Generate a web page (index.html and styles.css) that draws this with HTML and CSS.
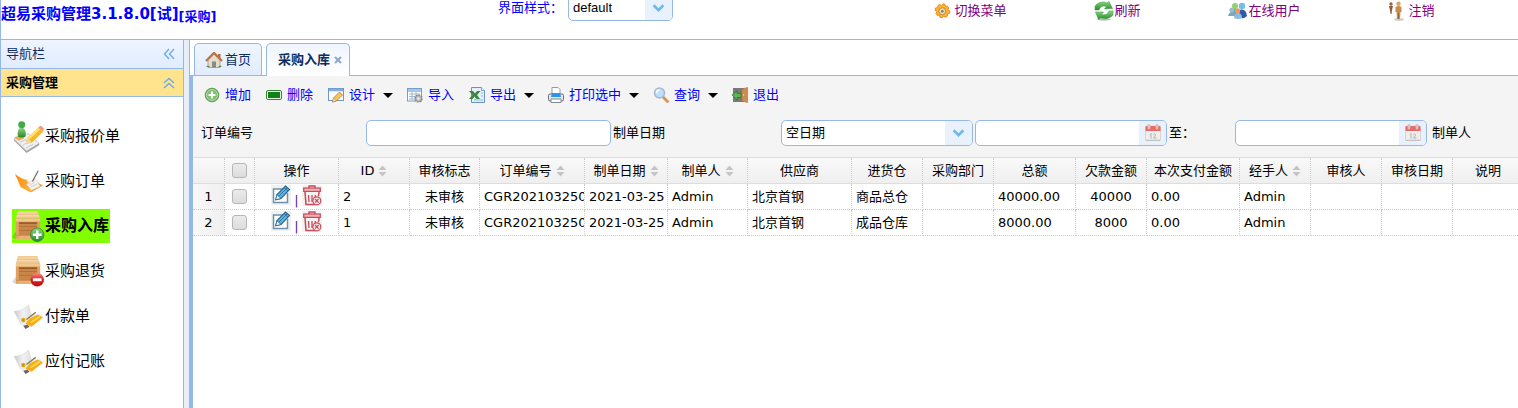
FILE: index.html
```html
<!DOCTYPE html>
<html lang="zh-CN">
<head>
<meta charset="utf-8">
<title>超易采购管理</title>
<link rel="stylesheet" href="styles.css">
</head>
<body>
<svg class="defs" width="0" height="0" aria-hidden="true">
  <defs>
    <linearGradient id="wood" x1="0" y1="0" x2="0" y2="1"><stop offset="0" stop-color="#d28f50"/><stop offset="1" stop-color="#e3a563"/></linearGradient>
    <linearGradient id="woodLid" x1="0" y1="0" x2="0" y2="1"><stop offset="0" stop-color="#f0c88e"/><stop offset=".5" stop-color="#f9ddb0"/><stop offset="1" stop-color="#e8bb80"/></linearGradient>
    <linearGradient id="green" x1="0" y1="0" x2="0" y2="1"><stop offset="0" stop-color="#8fd486"/><stop offset="1" stop-color="#218a25"/></linearGradient>
    <linearGradient id="red" x1="0" y1="0" x2="0" y2="1"><stop offset="0" stop-color="#f78a8a"/><stop offset=".5" stop-color="#dc1f25"/><stop offset="1" stop-color="#c00a12"/></linearGradient>
    <linearGradient id="orange" x1="0" y1="0" x2="1" y2="1"><stop offset="0" stop-color="#ff8a10"/><stop offset="1" stop-color="#ffb63a"/></linearGradient>
    <linearGradient id="paper" x1="0" y1="0" x2="1" y2="0"><stop offset="0" stop-color="#c9c9c9"/><stop offset=".5" stop-color="#f2f2f2"/><stop offset="1" stop-color="#dedede"/></linearGradient>
  </defs>
  <symbol id="crate" viewBox="0 0 34 34">
    <path d="M0 28l4-6h22v8H4z" fill="#000" opacity=".14"/>
    <path d="M6 1h20l3 8H4z" fill="url(#woodLid)"/>
    <path d="M5 4.500h22" stroke="#deb277" stroke-width=".7"/>
    <rect x="4" y="9" width="25" height="21" rx="1" fill="url(#wood)"/>
    <path d="M4 10.500h25" stroke="#f3c88d" stroke-width="3"/>
    <rect x="7" y="13" width="19" height="13" fill="#c98648"/>
    <path d="M7 13.500h19" stroke="#8f5526" stroke-width="1.500"/>
    <path d="M7 17h19M7 21h19" stroke="#ad6c36" stroke-width=".8"/>
    <path d="M4 28h25" stroke="#e8b274" stroke-width="3.500"/>
    <path d="M5.500 12v17M27.500 12v17" stroke="#dfa465" stroke-width="2.500"/>
    <path d="M4 26h25" stroke="#b97a3f" stroke-width=".6"/>
  </symbol>
  <symbol id="payment" viewBox="0 0 32 32">
    <path d="M2 11Q10 11 16 5l3 11Q15 21 9 24z" fill="url(#paper)" stroke="#ccc" stroke-width=".5"/>
    <path d="M19 15l8-2 3 3-12 8-8 2-1-3z" fill="#eee"/>
    <path d="M17 18l8-4 5 3-11 9-6-3z" fill="#f8ad12"/>
    <path d="M18 22l9-6" stroke="#fdd95a" stroke-width="1.600"/>
    <path d="M14 19l9-7" stroke="#8b7a55" stroke-width="1.300"/>
    <circle cx="11" cy="19.500" r="2.200" fill="#e9aa18"/>
    <circle cx="11" cy="19.500" r=".8" fill="#b87d08"/>
    <path d="M11 25l4-1 2 2-4 2z" fill="#666"/>
  </symbol>
  <symbol id="edit" viewBox="0 0 20 20">
    <rect width="20" height="20" fill="#f1f1f1"/>
    <path d="M13 4H2.500v13.500h14V8" fill="#fff" stroke="#6d92b1" stroke-width="1.500"/>
    <path d="M5 14.500l1-5L14.500 1l4 3.500L10 13.500z" fill="#5bb5e3" stroke="#2d668d" stroke-width="1.100"/>
    <path d="M6 9.500l4 4-5.500 1.500z" fill="#e3eef5" stroke="#2d668d" stroke-width=".9"/>
    <path d="M8 11l8-8M13 2.500L17 6" fill="none" stroke="#2d668d" stroke-width=".8"/>
  </symbol>
  <symbol id="trash" viewBox="0 0 20 21">
    <rect width="20" height="21" fill="#f3f1f2"/>
    <path d="M7 3V1h6v2" fill="none" stroke="#c74b5a" stroke-width="1.400"/>
    <rect x="1.700" y="3" width="16.600" height="3.400" fill="#efb1b7" stroke="#c74b5a" stroke-width="1.200"/>
    <path d="M3 7l1 12.500h10M17 7l-.5 4" fill="none" stroke="#c74b5a" stroke-width="1.500"/>
    <path d="M6.500 10l.5 7M10 10v7M13.300 10v2" stroke="#c74b5a" stroke-width="1.300"/>
    <circle cx="14.800" cy="15.800" r="4" fill="#f8e4e5" stroke="#c74b5a" stroke-width="1.200"/>
    <path d="M13 14l3.600 3.600M16.600 14L13 17.600" stroke="#c74b5a" stroke-width="1.200"/>
  </symbol>
  <symbol id="calendar" viewBox="0 0 18 18">
    <rect x="1.500" y="3" width="15" height="14" rx="1" fill="#bdbdbd"/>
    <rect x="1.500" y="2" width="15" height="14" rx="1" fill="#f0eeec" stroke="#cfcccb" stroke-width=".6"/>
    <path d="M1.500 7V3q0-1 1-1h13q1 0 1 1v4z" fill="#e96c68"/>
    <path d="M5 1v3M13 1v3" stroke="#d8c4c4" stroke-width="2.800" stroke-linecap="round"/>
    <path d="M6 10.500l1-1v5M9.500 10.500q1-1.500 2 0 0 1.500-2 3.500h3" fill="none" stroke="#b0b0b0"/>
  </symbol>
  <symbol id="sort" viewBox="0 0 10 12"><path d="M5 0l4.500 5h-9zM5 12l4.500-5h-9z" fill="#c4c4c4"/></symbol>
</svg>

<header class="top">
  <h1 class="brand">超易采购管理3.1.8.0[试]<small>[采购]</small></h1>
  <div class="theme">
    <label for="theme">界面样式：</label>
    <span class="combo combo-theme"><select id="theme"><option>default</option></select><svg class="chev" viewBox="0 0 12 8"><path d="M1.500 1.500L6 6l4.500-4.500"/></svg></span>
  </div>
  <a class="toplink spaced" href="#menu"><svg width="17" height="17" viewBox="0 0 17 17"><path d="M9 .8l2 .6.4 2 2-.2 1.500 1.800-1 1.800 2 1.200-.4 2.400-2.200.4.200 2.200-2 1.200-1.800-1.200-1.500 1.800-2.400-.6-.2-2.200-2.200.4-1.400-1.900 1.200-1.900L1 7.200l.6-2.300 2.200-.2L3.900 2.500l2-1.100L7.600 2.700z" fill="#ffb52c" stroke="#ea8412" stroke-width=".9"/><circle cx="8.300" cy="8.200" r="3.500" fill="#e9d9ae" stroke="#c48a35"/><circle cx="8.300" cy="8.200" r="1.300" fill="#77777f"/></svg>切换菜单</a>
  <a class="toplink" href="#refresh"><svg width="20" height="20" viewBox="0 0 20 20"><ellipse cx="10" cy="18.500" rx="7" ry="1.200" fill="#bbb"/><path d="M1 9V5q5-6 12-3l2-1.500 3.500 7-8 .5 2-2.500Q7 3.500 5 9z" fill="url(#green)" stroke="#4fa851" stroke-width=".6"/><path d="M19 10v4q-5 5.500-12 3l-2.500 1.500L1.500 11h8l-2 2.500Q13 15 15 10z" fill="url(#green)" stroke="#4fa851" stroke-width=".6"/></svg>刷新</a>
  <a class="toplink" href="#online"><svg width="20" height="18" viewBox="0 0 20 18"><circle cx="7" cy="4" r="3" fill="#8fd46c"/><circle cx="14" cy="4" r="3.200" fill="#75bdea"/><path d="M3 12q1-6 5-5l3 6z" fill="#4c96cf"/><path d="M11 8q7-2 8 6-4 4-8 1z" fill="#3158ad"/><circle cx="4" cy="8" r="2.600" fill="#9bbcca"/><path d="M0 14q1-4 4-4 4 0 4 4z" fill="#7fa7bb"/><circle cx="9.500" cy="9" r="2.700" fill="#f09a55"/><path d="M6 16q0-5 4-5 4 0 4 5-4 2-8 0z" fill="#8abedf"/></svg>在线用户</a>
  <a class="toplink spaced" href="#logout"><svg width="17" height="20" viewBox="0 0 17 20"><ellipse cx="11" cy="18.500" rx="5" ry="1.300" fill="#ccc"/><circle cx="3" cy="3" r="1.700" fill="#996336"/><path d="M1 5h4l-1 4-.5 4h-1L2 9z" fill="#8d5a34"/><circle cx="10.500" cy="2.800" r="2.200" fill="#d8a764"/><path d="M7.500 6q3-2 6 0v5h-1l-.5 7h-3l-.5-7h-1z" fill="#c68f4d"/><path d="M10.500 12v6" stroke="#8c5c2e" stroke-width=".8"/></svg>注销</a>
</header>

<div class="workspace">
  <aside class="side">
    <h2 class="side-title">导航栏<button type="button" class="icon-btn" aria-label="收起"><svg width="12" height="12" viewBox="0 0 12 12"><path d="M6 1L1.500 6 6 11M11 1L6.500 6l4.500 5"/></svg></button></h2>
    <h3 class="side-title group">采购管理<button type="button" class="icon-btn" aria-label="折叠"><svg width="12" height="12" viewBox="0 0 12 12"><path d="M1 6l5-4.500L11 6M1 11l5-4.500 5 4.500"/></svg></button></h3>
    <nav class="nav">
      <a href="#quote"><svg viewBox="0 0 34 34"><path d="M2 19l15-5 11 10-13 8z" fill="#f1f1f1" stroke="#c2c2c2" stroke-width=".8"/><path d="M2 19.500L15 32l13-8v2L15 34 2 21z" fill="#a5a5a5"/><path d="M6 21l6-2M8 23l7-3M11 26l7-4M14 29l8-4" stroke="#bcbcbc" stroke-width=".8"/><path d="M2 18l8-3 3 3-6 3z" fill="#f3a84d"/><path d="M6 17q-1-9 4-9t4 9q-4 2-8 0z" fill="url(#green)"/><circle cx="10" cy="4.800" r="3.600" fill="#42aa48"/><path d="M14 25l2-7L27 8l5 4-11 11z" fill="#f6b926"/><path d="M16 18L27 8l2 1.500L18 20z" fill="#ffe16c"/><path d="M27 8l1.500-1.500q2-1 4 2 .5 1.500-.5 3.500z" fill="#f39a72"/><path d="M14 25l2-7 4 5z" fill="#eed7ae"/></svg>采购报价单</a>
      <a href="#order"><svg viewBox="0 0 34 34"><path d="M9 21l14-5 9 5-12 7z" fill="#f6a232"/><path d="M3 9q7 6 12 6l6 10-2 3-10-5z" fill="url(#orange)"/><path d="M15 20l9-6 5 8-9 4z" fill="#f4f4f2" stroke="#ccc" stroke-width=".6"/><path d="M18 21l6-3.500M19 23l7-3.500" stroke="#c4c4c4" stroke-width=".8"/><path d="M21 17l6-11" stroke="#666" stroke-width="1.200"/><path d="M15 15l5 6" stroke="#fbe0bd" stroke-width="1.500"/></svg>采购订单</a>
      <a href="#stock-in" class="active"><svg viewBox="0 0 34 34"><use href="#crate"/><circle cx="26" cy="25.500" r="7" fill="url(#green)" stroke="#247f27" stroke-width=".7"/><path d="M26 21v9M21.500 25.500h9" stroke="#fff" stroke-width="2.600"/></svg>采购入库</a>
      <a href="#return"><svg viewBox="0 0 34 34"><use href="#crate"/><circle cx="26" cy="25.500" r="7" fill="url(#red)"/><path d="M21.500 25.500h9" stroke="#fff" stroke-width="3"/></svg>采购退货</a>
      <a href="#pay"><svg viewBox="0 0 32 32"><use href="#payment"/></svg>付款单</a>
      <a href="#payable"><svg viewBox="0 0 32 32"><use href="#payment"/></svg>应付记账</a>
    </nav>
  </aside>

  <main class="main">
    <div class="tabs">
      <a class="tab" href="#home"><svg width="18" height="16" viewBox="0 0 18 16"><path d="M3 8l6-6 6 6v7.500H3z" fill="#e5ddcc" stroke="#998c78" stroke-width=".7"/><path d="M13 2h2.500v5H13z" fill="#b66a44"/><path d="M1 9l8-8 8 8" fill="none" stroke="#b9754c" stroke-width="2.400"/><rect x="7" y="9.500" width="4" height="6" fill="#8a8985"/><path d="M1 15q2-3 4 0M13 15q2-3 4 0" fill="#569448"/></svg>首页</a>
      <div class="tab current"><b>采购入库</b><button type="button" class="tab-close" aria-label="关闭"><svg width="8" height="8" viewBox="0 0 8 8"><path d="M1 1l6 6M7 1L1 7" stroke="#8aa9cc" stroke-width="2"/></svg></button></div>
    </div>
    <div class="panel">
      <div class="toolbar">
        <a href="#add"><svg viewBox="0 0 16 16"><circle cx="8" cy="8" r="6.800" fill="#65aa58" stroke="#5a9c4e"/><circle cx="8" cy="8" r="5.500" fill="#7fbd70" stroke="#b9dfb0"/><path d="M8 4.500v7M4.500 8h7" stroke="#fff" stroke-width="2.200"/></svg>增加</a>
        <a href="#delete"><svg viewBox="0 0 16 16"><rect x=".5" y="3.500" width="15" height="9" rx="1.500" fill="#eef6ec" stroke="#33843a"/><rect x="2" y="5" width="12" height="6" fill="#118217"/></svg>删除</a>
        <a href="#design" class="menu"><svg viewBox="0 0 16 16"><rect x=".5" y="1.500" width="15" height="12" fill="#fcfdff" stroke="#6f96c6"/><path d="M1 3h14" stroke="#83afe0" stroke-width="2.500"/><path d="M4.500 15l1-4 6-6 3 3-6 6z" fill="#f7c45b" stroke="#b57d32" stroke-width=".8"/><path d="M4.500 15l1-4 3 3z" fill="#f7e1c0" stroke="#b57d32" stroke-width=".5"/></svg>设计</a>
        <a href="#import"><svg viewBox="0 0 16 16"><rect x=".5" y="1.500" width="14" height="12.500" fill="#fff" stroke="#779dcc"/><path d="M1 3.500h13" stroke="#a9c6e6" stroke-width="3"/><path d="M2 7h11M2 9.500h11M2 12h8M5 5v8M9 5v8" stroke="#9eb8cb"/><circle cx="11.500" cy="11.500" r="3.400" fill="#bbb" stroke="#888" stroke-width="1.700" stroke-dasharray="1.600 1"/><circle cx="11.500" cy="11.500" r="1.200" fill="#eee"/></svg>导入</a>
        <a href="#export" class="menu"><svg viewBox="0 0 16 16"><path d="M2.500.5h10l3 3v12h-13z" fill="#e4effb" stroke="#6792c6"/><path d="M12.500.5v3h3" fill="#fff" stroke="#6792c6" stroke-width=".8"/><path d="M5 13h9M12 6h2M12 9h2" stroke="#91b8df"/><path d="M0 4h4l2 2.500L8 4h3.500L8 8l3 4H7.500L5.500 9.500 3.500 12H0l3.500-4z" fill="#39863d"/></svg>导出</a>
        <a href="#print" class="menu"><svg viewBox="0 0 16 16"><path d="M4 8V.5h6l2 2V8z" fill="#fff" stroke="#999"/><rect x=".5" y="7" width="15" height="7" rx="1.500" fill="#e4e6e9" stroke="#686f7b"/><path d="M4 6h8l1 4H3z" fill="#2794ed"/><path d="M3 12h10v3.500H3z" fill="#fff" stroke="#838890"/></svg>打印选中</a>
        <a href="#query" class="menu"><svg viewBox="0 0 16 16"><path d="M10 10l4.500 4.500" stroke="#d59355" stroke-width="2.800" stroke-linecap="round"/><circle cx="6.500" cy="6" r="5" fill="#bddffa" stroke="#a6b9d2" stroke-width="1.600"/><path d="M3.500 6q0-3 3-3" fill="none" stroke="#fff" stroke-width="1.500"/></svg>查询</a>
        <a href="#exit"><svg viewBox="0 0 16 16"><path d="M1 1h11v14H1z" fill="#777b77"/><path d="M10 2l5.500-1.500v15L10 14z" fill="#c98d51" stroke="#a96e3a" stroke-width=".6"/><path d="M0 8l5-4v2.500h4v4H5V13z" fill="#5bb451" stroke="#2d7329" stroke-width=".7"/><circle cx="11.500" cy="8" r=".7" fill="#f9e09b"/></svg>退出</a>
      </div>
      <form class="filters">
        <label for="no">订单编号</label>
        <input id="no" class="box" type="text">
        <label for="mode">制单日期</label>
        <span class="combo"><select id="mode"><option>空日期</option></select><svg class="chev" viewBox="0 0 12 8"><path d="M1.500 1.500L6 6l4.500-4.500"/></svg></span>
        <span class="combo"><input type="text" id="from" aria-label="开始日期"><button type="button" class="pick" aria-label="选择日期"><svg width="18" height="18"><use href="#calendar"/></svg></button></span>
        <label for="to">至：</label>
        <span class="combo"><input type="text" id="to"><button type="button" class="pick" aria-label="选择日期"><svg width="18" height="18"><use href="#calendar"/></svg></button></span>
        <span class="maker">制单人</span>
      </form>
      <div class="grid-wrap">
        <table class="grid">
          <colgroup><col class="w32"><col class="w30"><col class="w84"><col class="w71"><col class="w70"><col class="w105"><col class="w83"><col class="w80"><col class="w104"><col class="w71"><col class="w71"><col class="w82"><col class="w71"><col class="w93"><col class="w71"><col class="w71"><col class="w71"><col class="w71"></colgroup>
          <thead>
            <tr>
              <th></th><th><input type="checkbox" aria-label="全选"></th><th>操作</th>
              <th>ID<svg class="sort"><use href="#sort"/></svg></th><th>审核标志</th>
              <th>订单编号<svg class="sort"><use href="#sort"/></svg></th><th>制单日期<svg class="sort"><use href="#sort"/></svg></th><th>制单人<svg class="sort"><use href="#sort"/></svg></th>
              <th>供应商</th><th>进货仓</th><th>采购部门</th><th>总额</th><th>欠款金额</th><th>本次支付金额</th><th>经手人<svg class="sort"><use href="#sort"/></svg></th><th>审核人</th><th>审核日期</th><th>说明</th>
            </tr>
          </thead>
          <tbody>
            <tr>
              <td class="num">1</td><td class="mid"><input type="checkbox" aria-label="选择第1行"></td>
              <td class="mid"><div class="ops"><a href="#edit2" aria-label="编辑"><svg width="20" height="20"><use href="#edit"/></svg></a><span>|</span><a href="#del2" aria-label="删除"><svg width="20" height="21"><use href="#trash"/></svg></a></div></td>
              <td>2</td><td class="mid">未审核</td><td>CGR20210325002</td><td>2021-03-25</td><td>Admin</td><td>北京首钢</td><td>商品总仓</td><td></td><td>40000.00</td><td class="mid">40000</td><td>0.00</td><td>Admin</td><td></td><td></td><td></td>
            </tr>
            <tr>
              <td class="num">2</td><td class="mid"><input type="checkbox" aria-label="选择第2行"></td>
              <td class="mid"><div class="ops"><a href="#edit1" aria-label="编辑"><svg width="20" height="20"><use href="#edit"/></svg></a><span>|</span><a href="#del1" aria-label="删除"><svg width="20" height="21"><use href="#trash"/></svg></a></div></td>
              <td>1</td><td class="mid">未审核</td><td>CGR20210325001</td><td>2021-03-25</td><td>Admin</td><td>北京首钢</td><td>成品仓库</td><td></td><td>8000.00</td><td class="mid">8000</td><td>0.00</td><td>Admin</td><td></td><td></td><td></td>
            </tr>
          </tbody>
        </table>
      </div>
    </div>
  </main>
</div>
</body>
</html>
```
FILE: styles.css
```css
* { box-sizing: border-box; }
html, body { height: 100%; }
body {
  margin: 0;
  display: flex;
  flex-direction: column;
  overflow: hidden;
  background: #fff;
  color: #000;
  border-left: 1px solid #95b8e7;
  font: 13px/18px "DejaVu Sans", "Noto Sans CJK SC", sans-serif;
}
a { text-decoration: none; }
svg { flex: none; display: block; }
button { border: 0; padding: 0; background: none; }
.defs { position: absolute; }

.top {
  display: grid;
  grid-template-columns: 497fr 400fr repeat(4, 147fr) 32fr;
  align-items: start;
  height: 40px;
  overflow: hidden;
  border-bottom: 1px solid #95b8e7;
}
.brand {
  margin: 0;
  padding-top: 2px;
  color: #00f;
  font-size: 15px;
  line-height: 24px;
  white-space: nowrap;
}
.brand small { font-size: 13px; vertical-align: -2px; }
.theme { display: flex; align-items: center; color: #00f; margin-top: -5px; }
.theme label { width: 70px; white-space: nowrap; }
.combo-theme { width: 105px; }
.toplink {
  display: flex;
  align-items: center;
  justify-content: center;
  gap: 0;
  height: 20px;
  margin-top: 1px;
  padding-right: 2px;
  color: #800080;
}
.spaced { gap: 3px; }

.workspace { flex: 1; display: flex; min-height: 0; background: #e6eef8; }
.side { width: 183px; flex: none; background: #fff; border-right: 1px solid #95b8e7; }
.side-title {
  display: flex;
  justify-content: space-between;
  align-items: center;
  margin: 0;
  padding: 0 8px 0 5px;
  height: 29px;
  color: #0e2d5f;
  font-size: 13px;
  font-weight: 400;
  background: linear-gradient(#eff5ff, #e0ecff);
  border-bottom: 1px solid #95b8e7;
}
.group { height: 28px; color: #000; font-weight: 700; background: #ffe48d; }
.icon-btn path { fill: none; stroke: #6cabea; stroke-width: 1.4; }
.nav { display: flex; flex-direction: column; align-items: flex-start; gap: 11px; padding: 22px 0 0 11px; }
.nav a { display: flex; align-items: center; height: 34px; color: #000; font-size: 15px; }
.nav svg { width: 33px; height: 33px; }
.nav .active { padding-right: 1px; background: #7fff00; font-size: 16px; font-weight: 700; }

.main {
  flex: 1;
  min-width: 0;
  margin-left: 5px;
  display: flex;
  flex-direction: column;
  background: #fff;
  border-left: 1px solid #95b8e7;
}
.tabs { display: flex; gap: 4px; height: 36px; padding: 3px 0 0 4px; border-bottom: 1px solid #95b8e7; }
.tab {
  display: flex;
  align-items: center;
  gap: 2px;
  height: 32px;
  padding: 0 10px;
  color: #0e2d5f;
  border: 1px solid #95b8e7;
  border-bottom: 0;
  border-radius: 5px 5px 0 0;
  background: linear-gradient(#eff5ff, #e0ecff);
}
.current { height: 33px; padding: 0 7px 0 11px; gap: 4px; background: linear-gradient(#eff5ff, #fff); }
.panel { flex: 1; min-width: 0; border-left: 3px solid #95b8e7; background: #fff; }
.toolbar { display: flex; align-items: center; gap: 15px; height: 38px; padding-left: 11px; background: #f4f4f4; }
.toolbar a { display: flex; align-items: center; gap: 5px; color: #00f; white-space: nowrap; }
.toolbar svg { width: 16px; height: 16px; }
.menu::after { content: ""; margin: 0 -1px 0 3px; border: 5px solid transparent; border-top-color: #000; border-bottom: 0; }
.filters {
  display: grid;
  grid-template-columns: 163px 245px 166px 192px 192px 64px 192px auto;
  column-gap: 2px;
  align-items: center;
  height: 43px;
  padding: 0 0 5px 8px;
  background: #f4f4f4;
  white-space: nowrap;
  overflow: hidden;
}
.maker { padding-left: 3px; }
.box, .combo { height: 26px; background: #fff; border: 1px solid #95b8e7; border-radius: 5px; }
.box { min-width: 0; padding: 0 4px; }
.combo { display: flex; overflow: hidden; }
.combo select, .combo input {
  flex: 1;
  min-width: 0;
  appearance: none;
  border: 0;
  padding: 0 4px;
  background: transparent;
  color: #000;
  font: inherit;
}
.combo-theme select { font-family: "Liberation Sans", sans-serif; }
.chev { width: 27px; height: 24px; padding: 7px; background: #e9f1fd; pointer-events: none; }
.chev path { fill: none; stroke: #6cb8ef; stroke-width: 2.4; }
.pick { display: flex; align-items: center; justify-content: center; width: 27px; background: #e9f1fd; }

.grid-wrap { overflow: hidden; border-top: 1px solid #ddd; }
.grid { width: 1331px; table-layout: fixed; border-collapse: separate; border-spacing: 0; }
.grid th, .grid td {
  height: 26px;
  padding: 0 0 0 4px;
  border-right: 1px dotted #ccc;
  border-bottom: 1px dotted #ccc;
  text-align: left;
  white-space: nowrap;
  overflow: hidden;
}
.grid th {
  padding: 0;
  font-weight: 400;
  text-align: center;
  background: linear-gradient(#f9f9f9, #efefef);
  border-bottom: 1px solid #ddd;
}
.grid td.num { text-align: center; padding: 0; background: linear-gradient(90deg, #f9f9f9, #efefef); }
.grid td.mid { text-align: center; padding: 0; }
.sort { display: inline-block; width: 9px; height: 12px; margin-left: 4px; vertical-align: -2px; }
.grid input {
  appearance: none;
  display: block;
  width: 15px;
  height: 15px;
  margin: 0 auto;
  border: 1px solid #b5b5b5;
  border-radius: 3px;
  background: linear-gradient(#ebebeb, #dcdcdc);
}
.ops { display: flex; align-items: flex-start; justify-content: center; gap: 3px; height: 25px; padding-top: 1px; color: #551a8b; }
.ops span { padding-top: 7px; }
.w30 { width: 30px; }
.w32 { width: 32px; }
.w70 { width: 70px; }
.w71 { width: 71px; }
.w80 { width: 80px; }
.w82 { width: 82px; }
.w83 { width: 83px; }
.w84 { width: 84px; }
.w93 { width: 93px; }
.w104 { width: 104px; }
.w105 { width: 105px; }
```
